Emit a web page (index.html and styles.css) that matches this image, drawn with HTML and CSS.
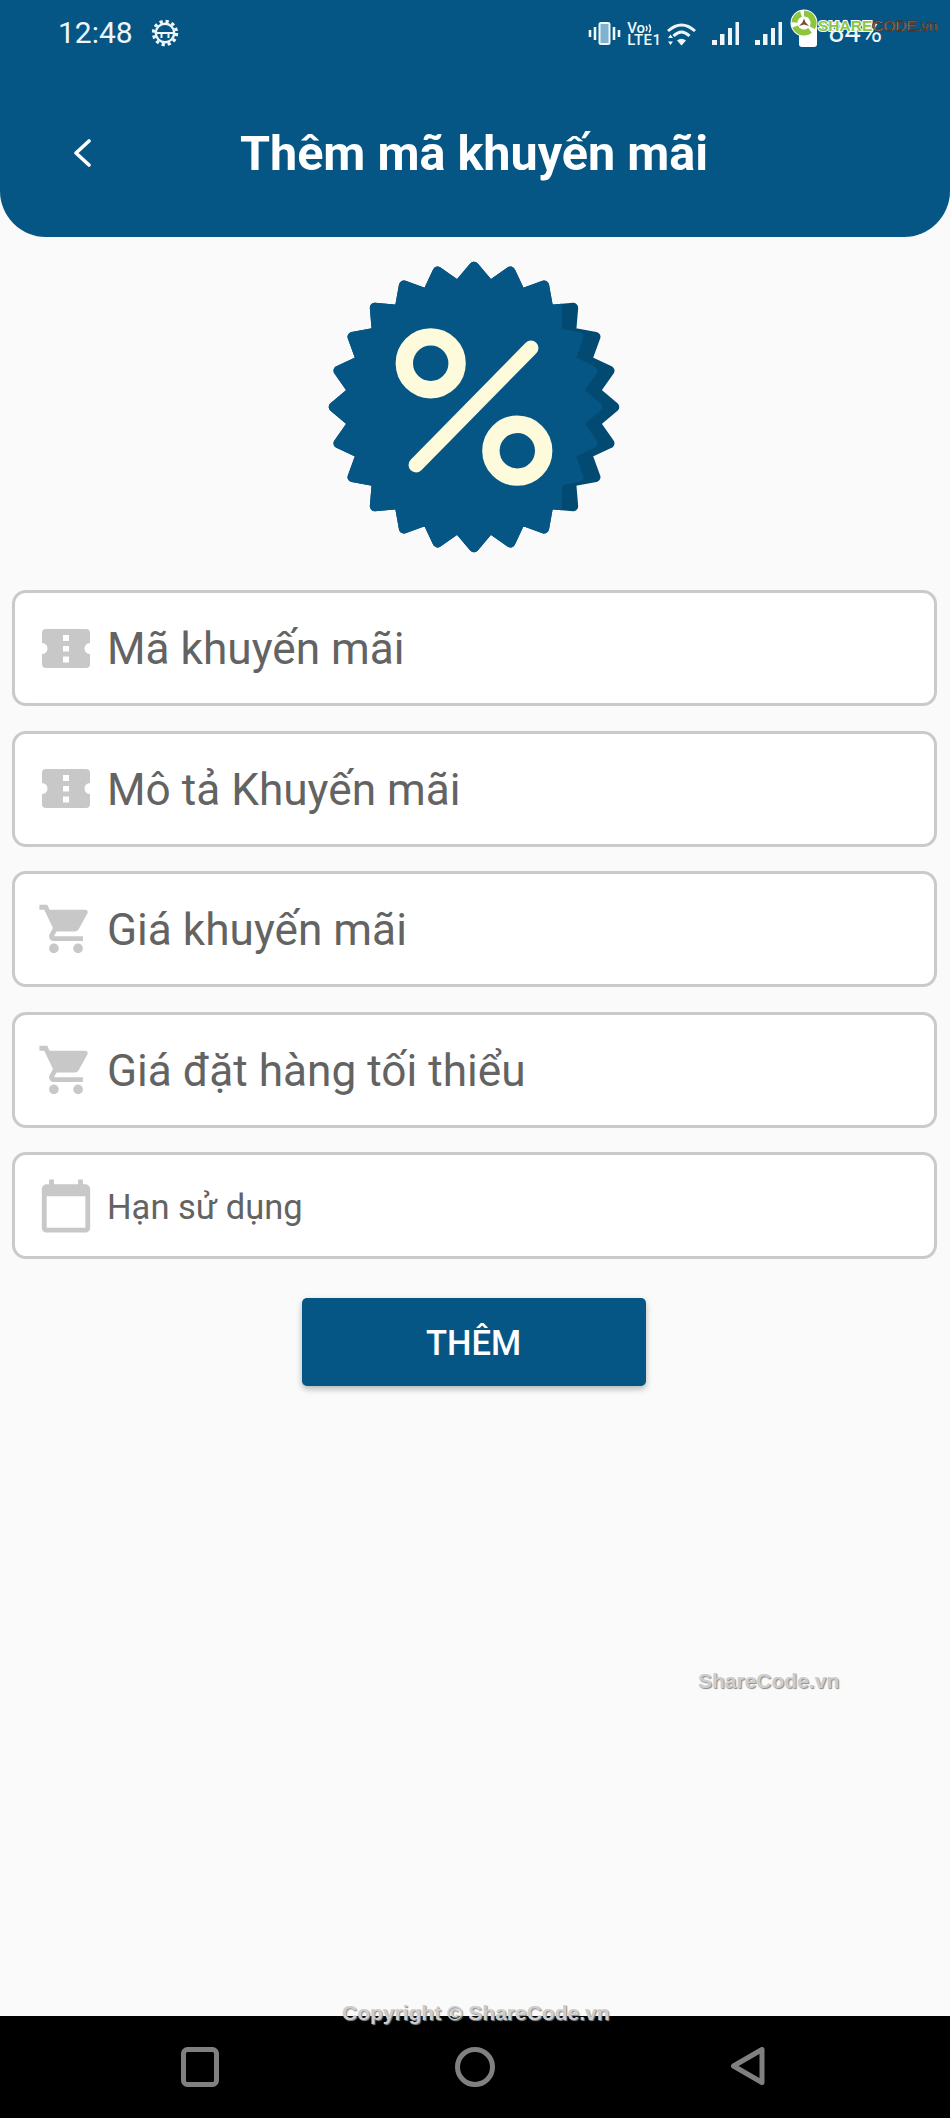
FILE: index.html
```html
<!DOCTYPE html>
<html lang="vi">
<head>
<meta charset="utf-8">
<title>Thêm mã khuyến mãi</title>
<link rel="stylesheet" href="styles.css">
</head>
<body>
<div class="page">
  <header class="appbar">
    <div class="status">
      <div class="status-left">
        <span class="clock">12:48</span>
        <svg class="gear" viewBox="0 0 28 28" fill="none" stroke="#eef6fa">
          <circle cx="14" cy="14" r="11.6" stroke-width="3.2" stroke-dasharray="3.2 2.9"/>
          <circle cx="14" cy="14" r="9.2" stroke-width="2.4"/>
          <path d="M5 14h18M10.5 14v5M17.500 14v5" stroke-width="2"/>
          <path d="M10 9.500h.1M18 9.500h.1" stroke-width="2"/>
        </svg>
      </div>
      <div class="status-right">
        <svg class="ic-vibrate" viewBox="0 0 33 23" fill="none" stroke="#eef6fa">
          <path d="M2 8v7M7 5v13M31 8v7M26 5v13" stroke-width="2.600"/>
          <rect x="11.500" y="1" width="10" height="21" rx="1.500" fill="#7fb2cc" stroke-width="2"/>
        </svg>
        <div class="volte">
          <span class="vo">Vo<svg class="vo-arcs" viewBox="0 0 8 11" fill="none" stroke="#eef6fa" stroke-width="1.500"><path d="M1 3q2 2.500 0 5M4 1.500q3 4 0 8"/></svg></span>
          <span class="lte">LTE1</span>
        </div>
        <svg class="ic-wifi" viewBox="0 0 29 25" fill="none" stroke="#eef6fa">
          <path d="M1 9Q14.500-3 28 9M6.500 14Q14.500 6 22.500 14" stroke-width="3"/>
          <path d="M10 18.500Q14.500 15 19 18.500L14.500 23.500Z" fill="#eef6fa" stroke="none"/>
          <path d="M3.500 12.500L6 16H1ZM3.500 23L6 19.500H1Z" fill="#eef6fa" stroke="none"/>
        </svg>
        <svg class="ic-signal" viewBox="0 0 28 23" fill="#eef6fa"><path d="M1 18h5v5H1zM9 12h4.500v11H9zM17 6h4v17h-4zM24.500 0H28v23h-3.500z"/></svg>
        <svg class="ic-signal" viewBox="0 0 28 23" fill="#eef6fa"><path d="M1 18h5v5H1zM9 12h4.500v11H9zM17 6h4v17h-4zM24.500 0H28v23h-3.500z"/></svg>
        <span class="battery"></span>
        <span class="percent">84%</span>
      </div>
    </div>
    <div class="titlebar">
      <svg class="back" viewBox="0 0 18 28" fill="none" stroke="#fff" stroke-width="3.600" stroke-linecap="round" stroke-linejoin="round"><path d="M16 2L3 14l13 12"/></svg>
      <h1 class="title">Thêm mã khuyến mãi</h1>
    </div>
  </header>

  <main class="content">
    <svg class="badge" viewBox="-150 -150 300 300">
      <defs>
        <polygon id="star" transform="scale(.995)" stroke-width="10" stroke-linejoin="round" points="0,-141 16.100,-121.900 36.500,-136.200 47.100,-113.600 70.500,-122.100 74.900,-97.600 99.700,-99.700 97.600,-74.900 122.100,-70.500 113.600,-47.100 136.200,-36.500 121.900,-16.100 141,0 121.900,16.100 136.200,36.500 113.600,47.100 122.100,70.500 97.600,74.900 99.700,99.700 74.900,97.600 70.500,122.100 47.100,113.600 36.500,136.200 16.100,121.900 0,141 -16.100,121.900 -36.500,136.200 -47.100,113.600 -70.500,122.100 -74.900,97.600 -99.700,99.700 -97.600,74.900 -122.100,70.500 -113.600,47.100 -136.200,36.500 -121.900,16.100 -141,0 -121.900,-16.100 -136.200,-36.500 -113.600,-47.100 -122.100,-70.500 -97.600,-74.900 -99.700,-99.700 -74.900,-97.600 -70.500,-122.100 -47.100,-113.600 -36.500,-136.200 -16.100,-121.900"/>
        <clipPath id="front"><rect x="-150" y="-150" width="238" height="300"/></clipPath>
        <clipPath id="side"><rect x="87" y="-150" width="63" height="300"/></clipPath>
      </defs>
      <use href="#star" fill="#034a73" stroke="#034a73"/>
      <use href="#star" fill="#055684" stroke="#055684" clip-path="url(#front)"/>
      <g clip-path="url(#side)"><use href="#star" x="-17" fill="#055684" stroke="#055684"/></g>
      <g fill="none" stroke="#fdfbdc">
        <circle cx="-43.300" cy="-43.700" r="26.400" stroke-width="17.400"/>
        <circle cx="43.300" cy="43.700" r="26.400" stroke-width="17.400"/>
        <path d="M57-59L-58 58" stroke-width="15" stroke-linecap="round"/>
      </g>
    </svg>

    <form class="form">
      <div class="field">
        <span class="field-icon"><svg class="ticket" viewBox="0 0 48 39"><path class="icon-fill" fill-rule="evenodd" d="M4 0h40a4 4 0 0 1 4 4v10a5.500 5.500 0 0 0 0 11v10a4 4 0 0 1-4 4H4a4 4 0 0 1-4-4V25a5.500 5.500 0 0 0 0-11V4a4 4 0 0 1 4-4zM21 6v6h6V6zM21 17v5.500h6V17zM21 27.500v6h6v-6z"/></svg></span>
        <span class="field-label">Mã khuyến mãi</span>
      </div>
      <div class="field">
        <span class="field-icon"><svg class="ticket" viewBox="0 0 48 39"><path class="icon-fill" fill-rule="evenodd" d="M4 0h40a4 4 0 0 1 4 4v10a5.500 5.500 0 0 0 0 11v10a4 4 0 0 1-4 4H4a4 4 0 0 1-4-4V25a5.500 5.500 0 0 0 0-11V4a4 4 0 0 1 4-4zM21 6v6h6V6zM21 17v5.500h6V17zM21 27.500v6h6v-6z"/></svg></span>
        <span class="field-label">Mô tả Khuyến mãi</span>
      </div>
      <div class="field">
        <span class="field-icon"><svg class="material" viewBox="0 0 24 24"><path class="icon-fill" d="M7 18c-1.100 0-1.990.9-1.990 2S5.900 22 7 22s2-.9 2-2-.9-2-2-2zM1 2v2h2l3.600 7.590-1.350 2.450c-.16.280-.25.610-.25.960 0 1.100.9 2 2 2h12v-2H7.420c-.14 0-.25-.11-.25-.25l.03-.12.9-1.630h7.450c.75 0 1.410-.41 1.750-1.030l3.580-6.490c.08-.14.120-.31.120-.48 0-.55-.45-1-1-1H5.210l-.94-2H1zm16 16c-1.100 0-1.990.9-1.990 2s.89 2 1.990 2 2-.9 2-2-.9-2-2-2z"/></svg></span>
        <span class="field-label">Giá khuyến mãi</span>
      </div>
      <div class="field">
        <span class="field-icon"><svg class="material" viewBox="0 0 24 24"><path class="icon-fill" d="M7 18c-1.100 0-1.990.9-1.990 2S5.900 22 7 22s2-.9 2-2-.9-2-2-2zM1 2v2h2l3.600 7.590-1.350 2.450c-.16.280-.25.610-.25.960 0 1.100.9 2 2 2h12v-2H7.420c-.14 0-.25-.11-.25-.25l.03-.12.9-1.630h7.450c.75 0 1.410-.41 1.750-1.030l3.580-6.490c.08-.14.120-.31.120-.48 0-.55-.45-1-1-1H5.210l-.94-2H1zm16 16c-1.100 0-1.990.9-1.990 2s.89 2 1.990 2 2-.9 2-2-.9-2-2-2z"/></svg></span>
        <span class="field-label">Giá đặt hàng tối thiểu</span>
      </div>
      <div class="field field-date">
        <span class="field-icon"><svg class="material" viewBox="0 0 24 24"><path class="icon-fill" d="M20 3h-1V1h-2v2H7V1H5v2H4c-1.100 0-2 .9-2 2v16c0 1.100.9 2 2 2h16c1.100 0 2-.9 2-2V5c0-1.100-.9-2-2-2zm0 18H4V8h16v13z"/></svg></span>
        <span class="field-label">Hạn sử dụng</span>
      </div>
      <button class="submit" type="button">THÊM</button>
    </form>
  </main>

  <nav class="navbar">
    <svg class="nav-square" viewBox="0 0 38 40"><rect x="2.500" y="2.500" width="33" height="35" rx="4"/></svg>
    <svg class="nav-circle" viewBox="0 0 40 40"><circle cx="20" cy="20" r="17.500"/></svg>
    <svg class="nav-back" viewBox="0 0 34 38"><path d="M31 2.500V35.500L2.500 19Z"/></svg>
  </nav>

  <div class="logo-mark">
    <svg class="logo-icon" viewBox="0 0 28 28">
      <circle cx="14" cy="14" r="13.500" fill="#fff"/>
      <g fill="none" stroke="#8cc63f" stroke-width="6">
        <path d="M14 4.500a9.500 9.500 0 0 1 8.200 14.300"/>
        <path d="M20 21.400a9.500 9.500 0 0 1-14.900-3.900"/>
        <path d="M4.500 13.500a9.500 9.500 0 0 1 6.500-8.500"/>
      </g>
      <path d="M14 9.500l1.600 4 3.400 3.500-5-1.500-5 1.500 3.400-3.500z" fill="#7a4a2b"/>
    </svg>
    <span class="logo-text"><span class="logo-share">SHARE</span><span class="logo-code">CODE.vn</span></span>
  </div>
  <div class="wm-share">ShareCode.vn</div>
  <div class="wm-copy">Copyright © ShareCode.vn</div>
</div>
</body>
</html>
```
FILE: styles.css
```css
* { box-sizing: border-box; }
html, body { margin: 0; padding: 0; }
body { background: #fafafa; font-family: Roboto, "Noto Sans", sans-serif; }

.page {
  position: relative;
  width: 950px;
  height: 2118px;
  display: flex;
  flex-direction: column;
  overflow: hidden;
  background: #fafafa;
}

/* App bar */
.appbar {
  height: 237px;
  flex: none;
  background: #055684;
  border-radius: 0 0 46px 46px;
  color: #fff;
}
.status {
  height: 68px;
  padding: 15px 68px 0 58px;
  display: flex;
  justify-content: space-between;
  align-items: flex-start;
  color: #eef6fa;
}
.status-left { display: flex; align-items: center; gap: 18px; }
.clock { font-size: 30px; line-height: 36px; }
.gear { width: 28px; height: 28px; }
.status-right { display: flex; align-items: flex-start; padding-top: 7px; }
.ic-vibrate { width: 33px; height: 23px; margin-right: 6px; }
.volte { width: 33px; height: 24px; margin-right: 7px; display: flex; flex-direction: column; font-weight: 500; }
.vo { font-size: 15px; line-height: 12px; display: flex; align-items: center; }
.vo-arcs { width: 8px; height: 11px; }
.lte { font-size: 15px; line-height: 12px; white-space: nowrap; letter-spacing: .5px; }
.ic-wifi { width: 29px; height: 25px; margin-right: 15px; }
.ic-signal { width: 28px; height: 23px; margin-right: 15px; }
.ic-signal + .ic-signal { margin-right: 17px; }
.battery { width: 18px; height: 26px; background: #fff; border-radius: 3px; margin-top: -1px; margin-right: 11px; }
.percent { font-size: 29px; line-height: 29px; margin-top: -4px; }

.titlebar {
  display: grid;
  grid-template-columns: 1fr auto 1fr;
  align-items: center;
  height: 169px;
  padding-right: 2px;
}
.back { width: 18px; height: 28px; margin-left: 73px; grid-column: 1; }
.title {
  grid-column: 2;
  margin: 2px 0 0;
  font-size: 48.500px;
  font-weight: 700;
  line-height: 58px;
  white-space: nowrap;
}

/* Content */
.content {
  flex: 1;
  display: flex;
  flex-direction: column;
  align-items: center;
  padding-top: 20px;
}
.badge { width: 300px; height: 300px; flex: none; margin-right: 2px; }
.form {
  width: 100%;
  margin-top: 33px;
  padding: 0 13px 0 12px;
  display: flex;
  flex-direction: column;
  gap: 24.500px;
}
.field {
  height: 116px;
  background: #fff;
  border: 3px solid #cacaca;
  border-radius: 14px;
  display: flex;
  align-items: center;
  padding-left: 22px;
  gap: 12px;
}
.field-date { height: 107px; }
.field-icon { width: 58px; height: 58px; flex: none; display: flex; align-items: center; justify-content: center; }
.ticket { width: 48px; height: 39px; }
.material { width: 58px; height: 58px; }
.icon-fill { fill: #c8c8c8; }
.field-label { font-size: 44.200px; color: #636363; line-height: 52px; white-space: nowrap; margin-top: 2px; }
.field-date .field-label { font-size: 34.500px; line-height: 40px; }

.submit {
  align-self: center;
  width: 344px;
  height: 88px;
  margin: 14px 2px 0 0;
  padding: 2px 0 0;
  border: 0;
  border-radius: 5px;
  background: #055684;
  color: #fff;
  font-family: inherit;
  font-size: 34.500px;
  font-weight: 500;
  box-shadow: 0 3px 6px rgba(0, 0, 0, .28);
}

/* Navigation bar */
.navbar {
  flex: none;
  height: 102px;
  background: #000;
  display: flex;
  justify-content: space-between;
  padding: 31px 185px 0 181px;
  align-items: flex-start;
}
.navbar svg { fill: none; stroke: #808080; stroke-width: 5; stroke-linejoin: round; }
.nav-square { width: 38px; height: 40px; }
.nav-circle { width: 40px; height: 40px; }
.nav-back { width: 34px; height: 38px; }

/* Watermarks lying over the screen */
.logo-mark { position: absolute; left: 790px; top: 9px; display: flex; align-items: flex-start; }
.logo-icon { width: 28px; height: 28px; }
.logo-text {
  font-family: "Liberation Sans", Arial, sans-serif;
  font-size: 15.500px;
  font-weight: 700;
  line-height: 18px;
  margin-top: 8px;
  white-space: nowrap;
}
.logo-share { color: #8cc63f; -webkit-text-stroke: 2px #fff; paint-order: stroke fill; }
.logo-code { color: #fff; -webkit-text-stroke: 1px #4e3420; font-weight: 400; }

.wm-share, .wm-copy {
  position: absolute;
  font-family: "Liberation Sans", Arial, sans-serif;
  font-weight: 700;
  color: #cdcdcd;
  text-shadow: 1px 1px 1px #8a8a8a;
  white-space: nowrap;
}
.wm-share { left: 698px; top: 1669px; font-size: 21px; line-height: 23px; }
.wm-copy { left: 342px; top: 2001px; font-size: 21px; line-height: 23px; }
```
